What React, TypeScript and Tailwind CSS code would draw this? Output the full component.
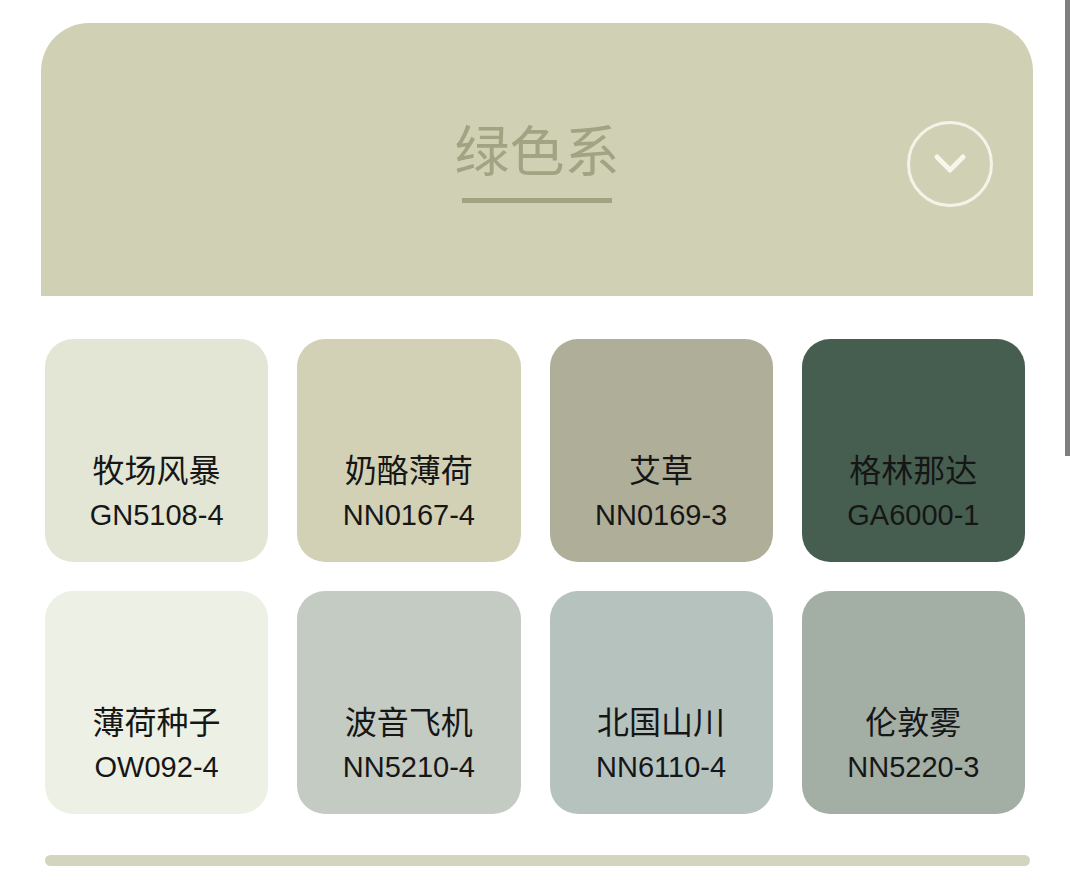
const swatches = [
  { name: "牧场风暴", code: "GN5108-4", bg: "bg-[#e3e6d5]" },
  { name: "奶酪薄荷", code: "NN0167-4", bg: "bg-[#d2d1b5]" },
  { name: "艾草", code: "NN0169-3", bg: "bg-[#afae98]" },
  { name: "格林那达", code: "GA6000-1", bg: "bg-[#465e50]" },
  { name: "薄荷种子", code: "OW092-4", bg: "bg-[#edf0e5]" },
  { name: "波音飞机", code: "NN5210-4", bg: "bg-[#c4cbc3]" },
  { name: "北国山川", code: "NN6110-4", bg: "bg-[#b5c2be]" },
  { name: "伦敦雾", code: "NN5220-3", bg: "bg-[#a3aea5]" },
];

function ChevronButton() {
  return (
    <button className="flex h-[86px] w-[86px] items-center justify-center rounded-full border-[3px] border-[#f5f3e8]">
      <svg width="34" height="22" viewBox="0 0 34 22" fill="none">
        <path d="M4 4 L17 17 L30 4" stroke="#f8f6ec" strokeWidth="5" strokeLinecap="round" strokeLinejoin="round" />
      </svg>
    </button>
  );
}

function Swatch({ name, code, bg }: { name: string; code: string; bg: string }) {
  return (
    <div className={`flex h-[223px] flex-col items-center justify-end rounded-[28px] pb-[30px] text-[#161616] ${bg}`}>
      <div className="text-[32px] leading-[40px] [font-family:'Noto_Sans_CJK_SC',sans-serif]">{name}</div>
      <div className="mt-[10px] text-[29px] leading-[34px] [font-family:'Liberation_Sans',Arial,sans-serif]">{code}</div>
    </div>
  );
}

export default function App() {
  return (
    <div className="relative min-h-[891px] w-[1070px] bg-white">
      <div className="pt-[23px]">
        <header className="ml-[41px] grid h-[273px] w-[992px] grid-cols-[1fr_auto_1fr] rounded-t-[48px] bg-[#d0d0b5] pt-[92px]">
          <div />
          <div className="flex flex-col items-center">
            <h1 className="text-[55px] leading-[64px] font-normal text-[#a1a383] [font-family:'Noto_Sans_CJK_SC',sans-serif]">
              绿色系
            </h1>
            <div className="mt-[19px] h-[5px] w-[150px] bg-[#a1a383]" />
          </div>
          <div className="mr-[40px] mt-[6px] justify-self-end">
            <ChevronButton />
          </div>
        </header>

        <section className="ml-[45px] mt-[43px] grid w-[980px] grid-cols-4 gap-x-[29px] gap-y-[29px]">
          {swatches.map((s) => (
            <Swatch key={s.code} {...s} />
          ))}
        </section>

        <div className="ml-[45px] mt-[41px] h-[11px] w-[985px] rounded-full bg-[#d3d5bf]" />
      </div>

      <div className="absolute right-0 top-0 h-[456px] w-[5px] bg-[#7f7f7f]" />
    </div>
  );
}
